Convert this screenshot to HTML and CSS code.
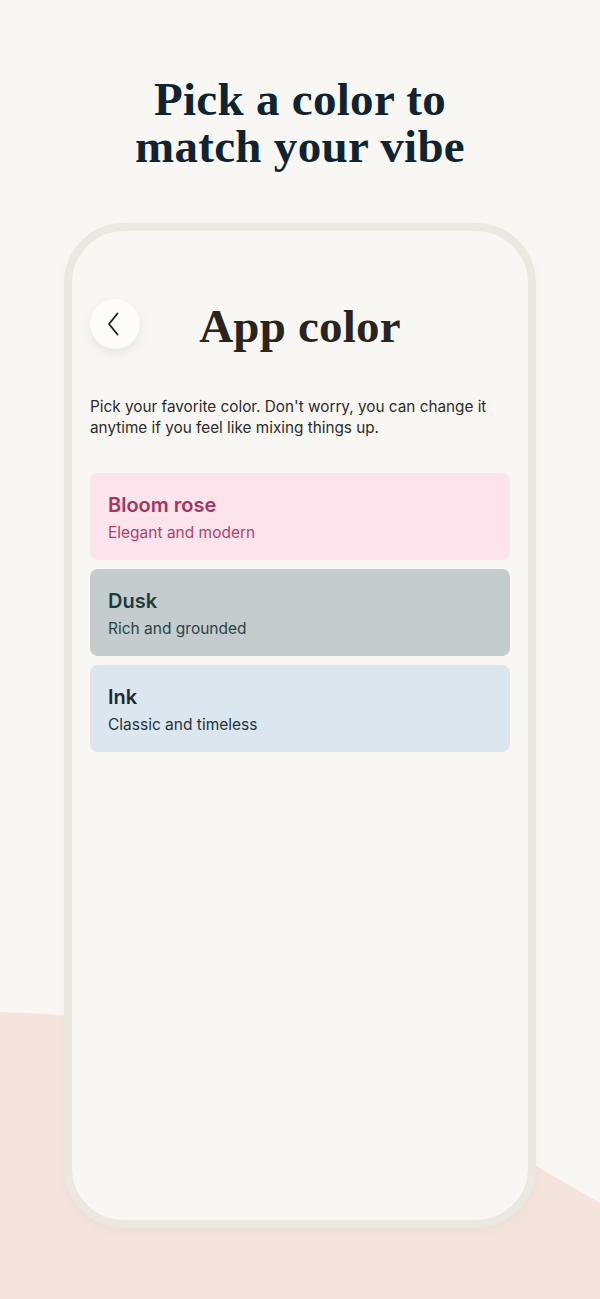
FILE: index.html
```html
<!DOCTYPE html>
<html lang="en">
<head>
<meta charset="utf-8">
<title>App color</title>
<link rel="stylesheet" href="styles.css">
</head>
<body>
<svg class="blob" width="600" height="1299" viewBox="0 0 600 1299" aria-hidden="true">
  <path d="M0 1012 C 180 1016 380 1070 536 1166 L 600 1203 L 600 1299 L 0 1299 Z" fill="#f5e4dd"/>
</svg>
<main class="page">
  <h1 class="headline"><span class="hl-line">Pick a color to</span><span class="hl-line">match your vibe</span></h1>
  <section class="phone">
    <div class="screen">
      <header class="topbar">
        <button class="back" aria-label="Back">
          <svg width="14" height="24" viewBox="0 0 14 24"><path d="M10.5 1.5 L2 12 L10.5 22.5" fill="none" stroke="#1c1c1c" stroke-width="1.8" stroke-linecap="round" stroke-linejoin="round"/></svg>
        </button>
        <h2 class="title">App color</h2>
      </header>
      <p class="desc">Pick your favorite color. Don't worry, you can change it anytime if you feel like mixing things up.</p>
      <ul class="options">
        <li class="option rose">
          <span class="opt-name">Bloom rose</span>
          <span class="opt-sub">Elegant and modern</span>
        </li>
        <li class="option dusk">
          <span class="opt-name">Dusk</span>
          <span class="opt-sub">Rich and grounded</span>
        </li>
        <li class="option ink">
          <span class="opt-name">Ink</span>
          <span class="opt-sub">Classic and timeless</span>
        </li>
      </ul>
    </div>
  </section>
</main>
</body>
</html>
```
FILE: styles.css
```css
* { box-sizing: border-box; }
html, body { margin: 0; padding: 0; }
body {
  background: #f9f7f3;
  width: 600px;
  height: 1299px;
  overflow: hidden;
  position: relative;
  font-family: "Inter", "Liberation Sans", sans-serif;
}
.blob {
  position: absolute;
  left: 0;
  top: 0;
  z-index: 0;
}
.page {
  position: relative;
  z-index: 1;
  display: flex;
  flex-direction: column;
  align-items: center;
}
.headline {
  margin: 76px 0 0;
  display: flex;
  flex-direction: column;
  align-items: center;
  font-family: "Liberation Serif", serif;
  font-weight: 700;
  font-size: 47px;
  line-height: 47px;
  letter-spacing: 0.3px;
  color: #0f2433;
  text-align: center;
}
.hl-line { display: block; }
.phone {
  margin-top: 53px;
  width: 472px;
  height: 1005px;
  border: 8px solid #ebe8e2;
  border-radius: 60px;
  background: #f9f7f3;
  box-shadow: 0 4px 10px rgba(0,0,0,0.03);
}
.screen {
  padding: 68px 18px 0;
  display: flex;
  flex-direction: column;
}
.topbar {
  position: relative;
  height: 50px;
  display: flex;
  align-items: center;
  justify-content: center;
}
.back {
  position: absolute;
  left: 0;
  top: 0;
  width: 50px;
  height: 50px;
  border-radius: 50%;
  border: none;
  background: #fdfcfa;
  box-shadow: 0 4px 12px rgba(0,0,0,0.08);
  display: flex;
  align-items: center;
  justify-content: center;
  padding: 0 2px 0 0;
}
.title {
  margin: 4px 0 0;
  font-family: "Liberation Serif", serif;
  font-weight: 700;
  font-size: 47px;
  line-height: 50px;
  letter-spacing: 0.2px;
  color: #2a2420;
}
.desc {
  margin: 47px 0 0;
  font-size: 15.3px;
  line-height: 21px;
  color: #2b2b2b;
}
.options {
  list-style: none;
  margin: 35px 0 0;
  padding: 0;
  display: flex;
  flex-direction: column;
  gap: 9px;
}
.option {
  height: 87px;
  border-radius: 8px;
  padding: 20px 18px 0;
  display: flex;
  flex-direction: column;
}
.opt-name {
  font-size: 20px;
  font-weight: 600;
  line-height: 25px;
}
.opt-sub {
  margin-top: 5px;
  font-size: 15.5px;
  line-height: 20px;
}
.rose { background: #fce4ec; }
.rose .opt-name { color: #a63360; }
.rose .opt-sub { color: #b0416d; }
.dusk { background: #c5cccd; }
.dusk .opt-name { color: #1d3a3c; }
.dusk .opt-sub { color: #2a4446; }
.ink { background: #dce6ef; }
.ink .opt-name { color: #1b2a35; }
.ink .opt-sub { color: #233340; }
```
